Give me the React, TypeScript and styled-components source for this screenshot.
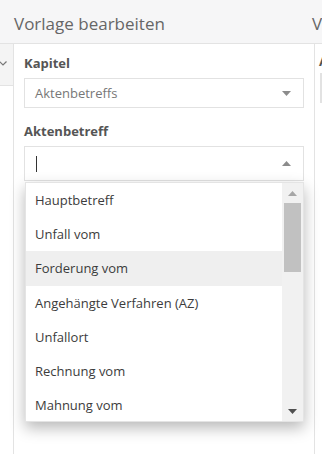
import React from 'react'
import styled, { createGlobalStyle } from 'styled-components'

const GlobalStyle = createGlobalStyle`
  html, body {
    margin: 0;
    padding: 0;
    background: #ffffff;
    font-family: "Open Sans", "Liberation Sans", Arial, sans-serif;
  }
  * { box-sizing: border-box; }
`

const items = [
  'Hauptbetreff',
  'Unfall vom',
  'Forderung vom',
  'Angehängte Verfahren (AZ)',
  'Unfallort',
  'Rechnung vom',
  'Mahnung vom',
]

const Arrow = ({ up, color }: { up?: boolean; color: string }) => (
  <svg width="9" height="5" viewBox="0 0 9 5">
    {up ? <polygon points="0,5 9,5 4.5,0" fill={color} /> : <polygon points="0,0 9,0 4.5,5" fill={color} />}
  </svg>
)

const App = () => {
  return (
    <Page>
      <GlobalStyle />
      <HeaderRow>
        <HeaderCell width={298}>Vorlage bearbeiten</HeaderCell>
        <HeaderCell>Vorlage</HeaderCell>
      </HeaderRow>
      <Body>
        <SideStrip>
          <StripTab>
            <svg width="8" height="5" viewBox="0 0 8 5" style={{ marginLeft: -1 }}>
              <polyline points="0.5,0.5 4,4 7.5,0.5" fill="none" stroke="#777" strokeWidth="1.2" />
            </svg>
          </StripTab>
        </SideStrip>
        <MainPanel>
          <Field>
            <Label>Kapitel</Label>
            <SelectBox height={30}>
              <SelectText>Aktenbetreffs</SelectText>
              <Arrow color="#8c8c8c" />
            </SelectBox>
          </Field>
          <Field>
            <Label>Aktenbetreff</Label>
            <InputWrap>
              <SelectBox height={35}>
                <Caret />
                <Arrow up color="#8c8c8c" />
              </SelectBox>
              <Dropdown>
                <ItemList>
                  {items.map((it, i) => (
                    <Item key={it} active={i === 2}>
                      {it}
                    </Item>
                  ))}
                </ItemList>
                <ScrollBar>
                  <ScrollButton>
                    <Arrow up color="#a6a6a6" />
                  </ScrollButton>
                  <Thumb />
                  <ScrollSpacer />
                  <ScrollButton>
                    <Arrow color="#505050" />
                  </ScrollButton>
                </ScrollBar>
              </Dropdown>
            </InputWrap>
          </Field>
        </MainPanel>
        <SidePanel>
          <SideLabel>Aktenbetreff</SideLabel>
          <SideBox />
        </SidePanel>
      </Body>
    </Page>
  )
}

export default App

const Page = styled.div`
  width: 322px;
  height: 454px;
  display: flex;
  flex-direction: column;
  overflow: hidden;
`
const HeaderRow = styled.div`
  height: 44px;
  flex-shrink: 0;
  display: flex;
  background: #f6f6f7;
  border-bottom: 1px solid #e3e3e3;
  overflow: hidden;
`
const HeaderCell = styled.div<{ width?: number }>`
  ${(p) => (p.width ? `width: ${p.width}px; flex-shrink: 0;` : 'flex: 1;')}
  padding: 12px 0 0 14px;
  font-size: 17px;
  color: #666;
  white-space: nowrap;
`
const Body = styled.div`
  flex: 1;
  display: flex;
  min-height: 0;
`
const SideStrip = styled.div`
  width: 14px;
  flex-shrink: 0;
  border-right: 1px solid #e3e3e3;
`
const StripTab = styled.div`
  height: 42px;
  background: #f4f4f4;
  border-bottom: 1px solid #e3e3e3;
  display: flex;
  align-items: center;
  padding-bottom: 2px;
`
const MainPanel = styled.div`
  width: 301px;
  flex-shrink: 0;
  border-right: 1px solid #e3e3e3;
  padding: 10px 10px 0 10px;
  display: flex;
  flex-direction: column;
  gap: 14px;
`
const Field = styled.div`
  display: flex;
  flex-direction: column;
  gap: 6px;
`
const Label = styled.div`
  font-size: 13px;
  font-weight: 700;
  line-height: 18px;
  color: #555;
`
const InputWrap = styled.div`
  position: relative;
`
const SelectBox = styled.div<{ height: number }>`
  height: ${(p) => p.height}px;
  border: 1px solid #e2e2e2;
  display: flex;
  align-items: center;
  justify-content: space-between;
  padding: 0 12px 0 10px;
  background: #fff;
`
const SelectText = styled.span`
  font-size: 13px;
  color: #777;
`
const Caret = styled.span`
  display: block;
  width: 1px;
  height: 16px;
  background: #333;
  margin-left: 1px;
`
const Dropdown = styled.div`
  position: absolute;
  top: calc(100% + 1px);
  left: 1px;
  right: 0;
  height: 240px;
  background: #fff;
  border: 1px solid #e4e4e4;
  box-shadow: 0 6px 14px rgba(0, 0, 0, 0.28);
  display: flex;
  z-index: 10;
`
const ItemList = styled.div`
  flex: 1;
  overflow: hidden;
`
const Item = styled.div<{ active?: boolean }>`
  height: 34.2px;
  display: flex;
  align-items: center;
  padding-left: 9px;
  font-size: 13px;
  color: #3c3c3c;
  background: ${(p) => (p.active ? '#efefef' : '#fff')};
  white-space: nowrap;
`
const ScrollBar = styled.div`
  width: 21px;
  background: #f1f1f1;
  display: flex;
  flex-direction: column;
`
const ScrollButton = styled.div`
  height: 20px;
  display: flex;
  align-items: center;
  justify-content: center;
`
const Thumb = styled.div`
  height: 69px;
  margin: 0 2px;
  background: #c1c1c1;
`
const ScrollSpacer = styled.div`
  flex: 1;
`
const SidePanel = styled.div`
  flex: 1;
  padding: 8px 0 0 4px;
  overflow: hidden;
  white-space: nowrap;
`
const SideLabel = styled.div`
  font-size: 13px;
  font-weight: 700;
  line-height: 18px;
  color: #555;
`
const SideBox = styled.div`
  margin: 3px 0 0 1px;
  height: 30px;
  border: 1px solid #e2e2e2;
`
